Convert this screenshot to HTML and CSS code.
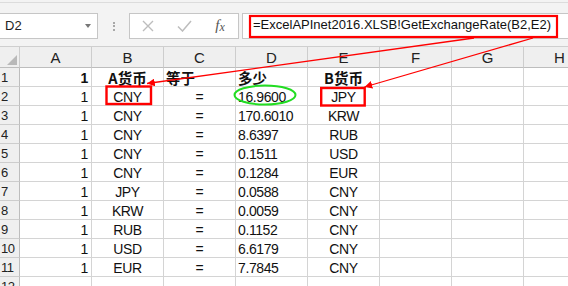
FILE: index.html
```html
<!DOCTYPE html>
<html lang="zh">
<head>
<meta charset="utf-8">
<title>Excel sheet</title>
<link rel="stylesheet" href="styles.css">
</head>
<body>
<div class="page">
  <div class="toolbar">
    <div class="bar">
      <div class="namebox"><span class="ref">D2</span><span class="caret"></span></div>
      <div class="grip"><i></i><i></i><i></i></div>
      <div class="fbuttons">
        <span class="slot"><svg width="12" height="12" viewBox="0 0 12 12"><path d="M1 1 L11 11 M11 1 L1 11" stroke="#bdbdbd" stroke-width="1.4" fill="none"/></svg></span>
        <span class="slot"><svg width="15" height="12" viewBox="0 0 15 12"><path d="M1 6.5 L5.5 11 L14 1" stroke="#bdbdbd" stroke-width="1.5" fill="none"/></svg></span>
        <span class="slot fx">f<span class="fx-x">x</span></span>
      </div>
      <div class="finput">=ExcelAPInet2016.XLSB!GetExchangeRate(B2,E2)</div>
    </div>
  </div>

  <div class="sheet">
    <div class="corner"><span class="tri"></span></div>
    <div class="ch">A</div><div class="ch">B</div><div class="ch">C</div><div class="ch">D</div><div class="ch">E</div><div class="ch">F</div><div class="ch">G</div><div class="ch">H</div>

    <div class="rh">1</div><div class="c r b">1</div><div class="c ctr"><span class="zh b">A货币</span></div><div class="c l"><span class="zh b">等于</span></div><div class="c l"><span class="zh b">多少</span></div><div class="c ctr"><span class="zh b">B货币</span></div><div class="c"></div><div class="c"></div><div class="c"></div>

    <div class="rh">2</div><div class="c r">1</div><div class="c ctr">CNY</div><div class="c ctr">=</div><div class="c l">16.9600</div><div class="c ctr">JPY</div><div class="c"></div><div class="c"></div><div class="c"></div>
    <div class="rh">3</div><div class="c r">1</div><div class="c ctr">CNY</div><div class="c ctr">=</div><div class="c l">170.6010</div><div class="c ctr">KRW</div><div class="c"></div><div class="c"></div><div class="c"></div>
    <div class="rh">4</div><div class="c r">1</div><div class="c ctr">CNY</div><div class="c ctr">=</div><div class="c l">8.6397</div><div class="c ctr">RUB</div><div class="c"></div><div class="c"></div><div class="c"></div>
    <div class="rh">5</div><div class="c r">1</div><div class="c ctr">CNY</div><div class="c ctr">=</div><div class="c l">0.1511</div><div class="c ctr">USD</div><div class="c"></div><div class="c"></div><div class="c"></div>
    <div class="rh">6</div><div class="c r">1</div><div class="c ctr">CNY</div><div class="c ctr">=</div><div class="c l">0.1284</div><div class="c ctr">EUR</div><div class="c"></div><div class="c"></div><div class="c"></div>
    <div class="rh">7</div><div class="c r">1</div><div class="c ctr">JPY</div><div class="c ctr">=</div><div class="c l">0.0588</div><div class="c ctr">CNY</div><div class="c"></div><div class="c"></div><div class="c"></div>
    <div class="rh">8</div><div class="c r">1</div><div class="c ctr">KRW</div><div class="c ctr">=</div><div class="c l">0.0059</div><div class="c ctr">CNY</div><div class="c"></div><div class="c"></div><div class="c"></div>
    <div class="rh">9</div><div class="c r">1</div><div class="c ctr">RUB</div><div class="c ctr">=</div><div class="c l">0.1152</div><div class="c ctr">CNY</div><div class="c"></div><div class="c"></div><div class="c"></div>
    <div class="rh">10</div><div class="c r">1</div><div class="c ctr">USD</div><div class="c ctr">=</div><div class="c l">6.6179</div><div class="c ctr">CNY</div><div class="c"></div><div class="c"></div><div class="c"></div>
    <div class="rh">11</div><div class="c r">1</div><div class="c ctr">EUR</div><div class="c ctr">=</div><div class="c l">7.7845</div><div class="c ctr">CNY</div><div class="c"></div><div class="c"></div><div class="c"></div>
    <div class="rh">12</div><div class="c"></div><div class="c"></div><div class="c"></div><div class="c"></div><div class="c"></div><div class="c"></div><div class="c"></div><div class="c"></div>
  </div>

  <svg class="annot" width="568" height="286" viewBox="0 0 568 286">
    <defs>
      <marker id="ah" viewBox="0 0 10 10" refX="10" refY="5" markerWidth="6" markerHeight="6" orient="auto">
        <path d="M0,0 L10,5 L0,10 z" fill="#ff0000"/>
      </marker>
    </defs>
    <rect x="250" y="16" width="307" height="21" fill="none" stroke="#ff0000" stroke-width="2.2"/>
    <rect x="106.5" y="86.5" width="44.5" height="17.5" fill="none" stroke="#ff0000" stroke-width="2.4"/>
    <rect x="321.2" y="88" width="43.5" height="17.5" fill="none" stroke="#ff0000" stroke-width="2.4"/>
    <ellipse cx="265" cy="95" rx="30.5" ry="9.5" fill="none" stroke="#22dd22" stroke-width="2"/>
    <line x1="474" y1="38" x2="147" y2="83.5" stroke="#ff0000" stroke-width="1.3" marker-end="url(#ah)"/>
    <line x1="533" y1="38" x2="364.5" y2="87" stroke="#ff0000" stroke-width="1.3" marker-end="url(#ah)"/>
  </svg>
</div>
</body>
</html>
```

FILE: styles.css
```css
* { box-sizing: border-box; }
html, body { margin: 0; padding: 0; background: #ffffff; }
body { overflow: hidden; }

.page {
  position: relative;
  width: 568px;
  height: 286px;
  overflow: hidden;
  font-family: "Liberation Sans", Arial, sans-serif;
  color: #1a1a1a;
}

/* ---------- formula toolbar ---------- */
.toolbar {
  height: 46px;
  background: #f3f3f3;
  padding-top: 2px;
}
.bar {
  height: 44px;
  border-top: 1px solid #dcdcdc;
  display: flex;
  align-items: flex-start;
  padding-top: 10px;
}
.namebox {
  margin-left: -1px;
  width: 99px;
  height: 26px;
  background: #fff;
  border: 1px solid #c6c6c6;
  display: flex;
  align-items: center;
  justify-content: space-between;
  padding: 0 6px 0 5px;
}
.ref {
  font-size: 13px;
  line-height: 24px;
  color: #222;
}
.caret {
  width: 0;
  height: 0;
  border-left: 3.5px solid transparent;
  border-right: 3.5px solid transparent;
  border-top: 4px solid #777;
}
.grip {
  width: 31px;
  height: 26px;
  display: flex;
  flex-direction: column;
  align-items: center;
  justify-content: center;
  gap: 1.5px;
}
.grip i {
  display: block;
  width: 2px;
  height: 2px;
  background: #a8a8a8;
}
.fbuttons {
  width: 110px;
  height: 26px;
  background: #fff;
  border: 1px solid #c6c6c6;
  display: flex;
}
.slot {
  width: 36px;
  display: flex;
  align-items: center;
  justify-content: center;
}
.fx {
  font-family: "Liberation Serif", "Times New Roman", serif;
  font-style: italic;
  font-size: 15px;
  color: #555;
  padding-bottom: 2px;
}
.fx-x {
  font-size: 12px;
  position: relative;
  top: 2px;
}
.finput {
  margin-left: 3px;
  flex: 1;
  height: 26px;
  background: #fff;
  border: 1px solid #c6c6c6;
  border-right: none;
  font-size: 13px;
  line-height: 22px;
  padding-left: 10px;
  color: #111;
  white-space: nowrap;
}

/* ---------- sheet grid ---------- */
.sheet {
  display: grid;
  grid-template-columns: 20px repeat(8, 72px);
  grid-template-rows: 21px repeat(12, 19px);
  border-top: 1px solid #cfcfcf;
  font-family: "Liberation Sans", Arial, "Noto Sans CJK SC", sans-serif;
  font-size: 14px;
  letter-spacing: -0.4px;
}
.corner, .ch, .rh {
  background: #efefef;
  border-right: 1px solid #cdcdcd;
  border-bottom: 1px solid #bdbdbd;
  color: #222;
}
.corner {
  position: relative;
}
.tri {
  position: absolute;
  right: 2px;
  bottom: 2px;
  width: 0;
  height: 0;
  border-left: 10px solid transparent;
  border-bottom: 10px solid #b9b9b9;
}
.ch {
  text-align: center;
  line-height: 20px;
  padding-top: 1px;
  font-size: 15px;
  letter-spacing: 0;
}
.rh {
  border-bottom: 1px solid #cdcdcd;
  border-right: 1px solid #bdbdbd;
  font-size: 13px;
  letter-spacing: -0.6px;
  line-height: 18px;
  padding-left: 1px;
  padding-top: 1px;
  white-space: nowrap;
}
.c {
  border-right: 1px solid #d4d4d4;
  border-bottom: 1px solid #d4d4d4;
  line-height: 18px;
  padding-top: 1px;
  white-space: nowrap;
  overflow: hidden;
  color: #111;
}
.r { text-align: right; padding-right: 3px; }
.l { text-align: left; padding-left: 2px; }
.ctr { text-align: center; }
.b { font-weight: bold; }
.zh {
  font-family: "Noto Sans CJK SC", sans-serif;
  font-size: 14.5px;
  letter-spacing: 0;
}

/* ---------- annotations overlay ---------- */
.annot {
  position: absolute;
  left: 0;
  top: 0;
  pointer-events: none;
}
```
